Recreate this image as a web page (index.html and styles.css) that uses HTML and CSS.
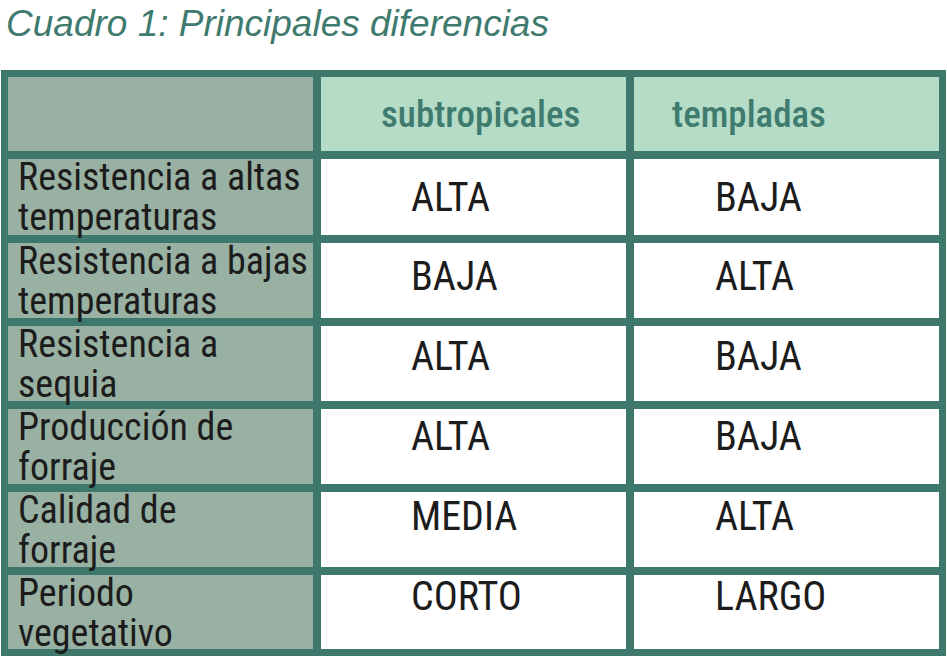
FILE: index.html
```html
<!DOCTYPE html>
<html lang="es">
<head>
<meta charset="utf-8">
<title>Cuadro 1</title>
<link rel="stylesheet" href="styles.css">
</head>
<body>
<h1 class="title">Cuadro 1: Principales diferencias</h1>
<div class="grid">
  <div class="corner"></div>
  <div class="head head-sub">subtropicales</div>
  <div class="head head-tem">templadas</div>

  <div class="label">Resistencia a altas<br>temperaturas</div>
  <div class="val c2 r1">ALTA</div>
  <div class="val c3 r1">BAJA</div>

  <div class="label">Resistencia a bajas<br>temperaturas</div>
  <div class="val c2 r2">BAJA</div>
  <div class="val c3 r2">ALTA</div>

  <div class="label">Resistencia a<br>sequia</div>
  <div class="val c2 r3">ALTA</div>
  <div class="val c3 r3">BAJA</div>

  <div class="label">Producción de<br>forraje</div>
  <div class="val c2 r4">ALTA</div>
  <div class="val c3 r4">BAJA</div>

  <div class="label">Calidad de<br>forraje</div>
  <div class="val c2 r5">MEDIA</div>
  <div class="val c3 r5">ALTA</div>

  <div class="label">Periodo<br>vegetativo</div>
  <div class="val c2 r6">CORTO</div>
  <div class="val c3 r6">LARGO</div>
</div>
</body>
</html>
```

FILE: styles.css
```css
html, body {
  margin: 0;
  padding: 0;
  background: #ffffff;
}

.title {
  margin: 4px 0 0 0;
  padding-left: 6px;
  font-family: "Liberation Sans", Arial, sans-serif;
  font-style: italic;
  font-weight: normal;
  font-size: 37px;
  line-height: 40px;
  color: #3f7a6e;
}

.grid {
  margin: 26px 0 0 1px;
  width: 931px;
  padding: 7px;
  background: #3e776c;
  display: grid;
  grid-template-columns: 305px 305px 305px;
  grid-template-rows: 74px 76px 75px 75px 75px 75px 74px;
  gap: 8px;
  font-family: "Roboto Condensed", Roboto, sans-serif;
  font-stretch: condensed;
}

.corner {
  background: #98b1a2;
}

.head {
  background: #b4dcc7;
  color: #3f7b6e;
  font-weight: 500;
  font-size: 37px;
  display: flex;
  align-items: center;
}

.head-sub { padding-left: 60px; }
.head-tem { padding-left: 38px; }

.label {
  background: #98b1a2;
  color: #1c1c1c;
  font-size: 38px;
  line-height: 40px;
  padding-left: 10px;
  white-space: nowrap;
}

.label-text {
  display: block;
}

.label {
  padding-top: 0;
}

.label::before {
  content: "";
  display: block;
  margin-top: -2px;
}

.val {
  background: #ffffff;
  color: #1c1c1c;
  font-size: 40px;
  line-height: 40px;
}

.c2 { padding-left: 90px; }
.c3 { padding-left: 81px; }

.r1 { padding-top: 19px; }
.r2 { padding-top: 14px; }
.r3 { padding-top: 11px; }
.r4 { padding-top: 8px; }
.r5 { padding-top: 5px; }
.r6 { padding-top: 2px; }
```
